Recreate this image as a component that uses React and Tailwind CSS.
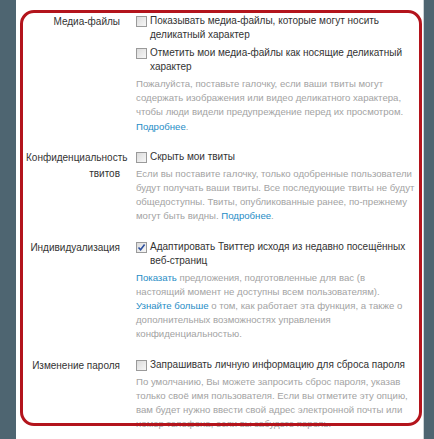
import { useState } from 'react'

const font = { fontFamily: '"Liberation Sans", Arial, sans-serif' }

function Checkbox({ checked }) {
  return (
    <span className="mt-[2px] mr-[3px] flex h-[11px] w-[11px] shrink-0 items-center justify-center border border-[#9a9a9a] bg-gradient-to-br from-[#dcdcdc] to-[#f7f7f7]">
      {checked && (
        <svg width="9" height="9" viewBox="0 0 9 9">
          <path d="M1.5 4.5 L3.6 6.8 L7.6 1.6" fill="none" stroke="#2c4f9e" strokeWidth="1.6" />
        </svg>
      )}
    </span>
  )
}

function Option({ checked, children, className = '' }) {
  return (
    <label className={'flex items-start whitespace-nowrap text-[10px] leading-[14px] text-[#333] ' + className}>
      <Checkbox checked={checked} />
      <span>{children}</span>
    </label>
  )
}

function Help({ children }) {
  return <p className="mt-[3px] whitespace-nowrap text-[9.6px] leading-[14.2px] text-[#a3a3a3]">{children}</p>
}

function Link({ children }) {
  return <a className="text-[#1f8dc6]">{children}</a>
}

function Row({ label, children }) {
  return (
    <div className="mb-[16px] flex">
      <div className="w-[94px] shrink-0 text-right text-[10px] leading-[16px] text-[#333]">{label}</div>
      <div className="ml-[16px] flex-1">{children}</div>
    </div>
  )
}

export default function App() {
  const [opts] = useState({ media: false, mark: false, hide: false, personal: true, reset: false })

  return (
    <div className="flex h-[439px] w-[434px] overflow-hidden bg-[#4e6571]" style={font}>
      <div className="w-[16px] shrink-0" />
      <div className="relative h-full w-[408px] shrink-0 border-r border-[#c9d2d6] bg-white">
        <div className="pl-[10px] pt-[14px]">
          <Row label="Медиа-файлы">
            <Option checked={opts.media} className="mb-[4px]">
              Показывать медиа-файлы, которые могут носить
              <br />
              деликатный характер
            </Option>
            <Option checked={opts.mark}>
              Отметить мои медиа-файлы как носящие деликатный
              <br />
              характер
            </Option>
            <Help>
              Пожалуйста, поставьте галочку, если ваши твиты могут
              <br />
              содержать изображения или видео деликатного характера,
              <br />
              чтобы люди видели предупреждение перед их просмотром.
              <br />
              <Link>Подробнее</Link>.
            </Help>
          </Row>

          <Row label="Конфиденциальность твитов">
            <Option checked={opts.hide}>Скрыть мои твиты</Option>
            <Help>
              Если вы поставите галочку, только одобренные пользователи
              <br />
              будут получать ваши твиты. Все последующие твиты не будут
              <br />
              общедоступны. Твиты, опубликованные ранее, по-прежнему
              <br />
              могут быть видны. <Link>Подробнее</Link>.
            </Help>
          </Row>

          <Row label="Индивидуализация">
            <Option checked={opts.personal}>
              Адаптировать Твиттер исходя из недавно посещённых
              <br />
              веб-страниц
            </Option>
            <Help>
              <Link>Показать</Link> предложения, подготовленные для вас (в
              <br />
              настоящий момент не доступны всем пользователям).
              <br />
              <Link>Узнайте больше</Link> о том, как работает эта функция, а также о
              <br />
              дополнительных возможностях управления
              <br />
              конфиденциальностью.
            </Help>
          </Row>

          <Row label="Изменение пароля">
            <Option checked={opts.reset}>Запрашивать личную информацию для сброса пароля</Option>
            <Help>
              По умолчанию, Вы можете запросить сброс пароля, указав
              <br />
              только своё имя пользователя. Если вы отметите эту опцию,
              <br />
              вам будет нужно ввести свой адрес электронной почты или
              <br />
              номер телефона, если вы забудете пароль.
            </Help>
          </Row>
        </div>

        <div className="pointer-events-none absolute left-[4px] right-[1px] top-[10px] bottom-[13px] rounded-[14px] border-[3px] border-[#b3141c]" />
      </div>
    </div>
  )
}
